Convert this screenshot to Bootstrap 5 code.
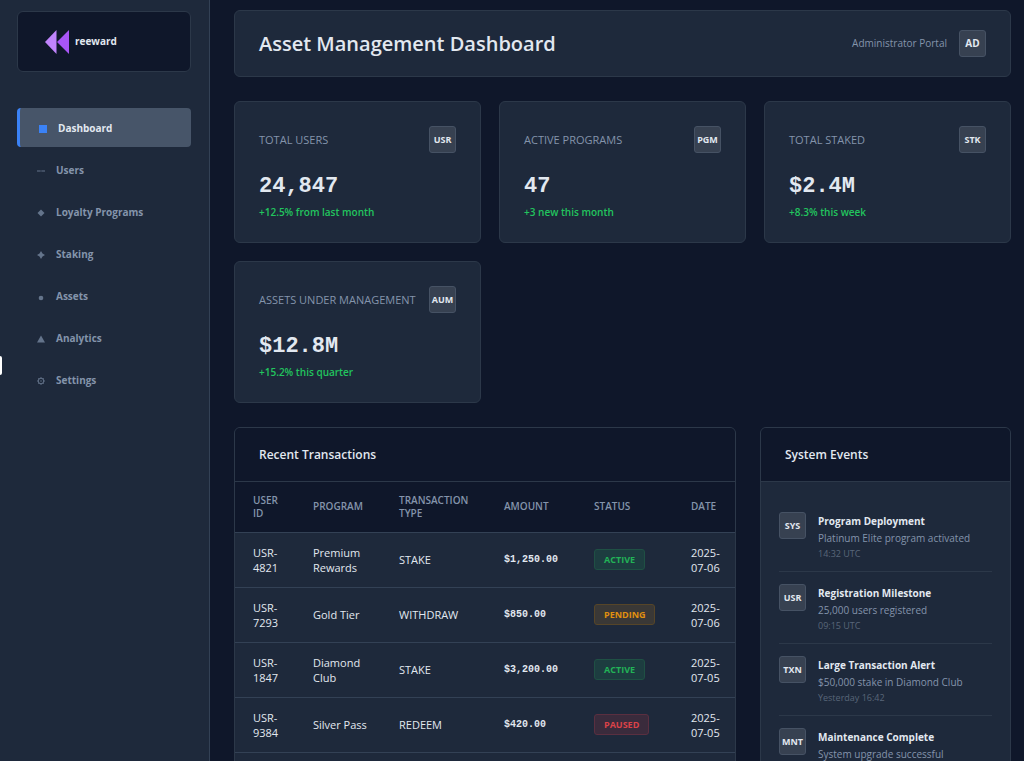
<!DOCTYPE html>
<html lang="en">
<head>
<meta charset="utf-8">
<meta name="viewport" content="width=device-width, initial-scale=1">
<title>Asset Management Dashboard</title>
<link href="https://cdn.jsdelivr.net/npm/bootstrap@5.3.0/dist/css/bootstrap.min.css" rel="stylesheet">
<style>
:root { --ink: #0f172a; --panel: #1e293b; --line: #2c3849; --muted: #8494ab; --bright: #e2e8f0; }
body { background: var(--ink); color: var(--bright); font-family: "Open Sans", "Noto Sans", sans-serif; font-size: 11px; line-height: 15px; }
.sidebar { width: 210px; background: var(--panel); border-right: 1px solid #334155; padding: 11px 18px 11px 17px; }
.brand { background: var(--ink); border: 1px solid var(--line); border-radius: 6px; height: 61px; margin-bottom: 36px; padding-left: 26px; gap: 5px; color: var(--bright); font-size: 10px; font-weight: 700; }
.side-nav { gap: 3px; }
.side-nav .nav-link { height: 39px; padding: 2px 18px 0; gap: 9px; border-radius: 4px; color: var(--muted); font-size: 10px; font-weight: 700; }
.side-nav .nav-link svg { width: 12px; height: 12px; fill: #64748b; }
.side-nav .nav-link.active { background: #475569; color: var(--bright); border-left: 3px solid #3b82f6; padding-left: 17px; }
.side-nav .nav-link.active svg { fill: #3b82f6; }
.edge-tab { left: 0; top: 356px; width: 2px; height: 19px; background: #fff; border-radius: 0 2px 2px 0; }
.content { padding: 10px 13px 0 24px; scrollbar-width: none; }
.content::-webkit-scrollbar { display: none; }
.panel { background: var(--panel); border: 1px solid var(--line); border-radius: 6px; }
.topbar { height: 67px; padding: 0 24px; margin-bottom: 24px; }
.topbar h1 { font-size: 20px; line-height: 30px; font-weight: 600; }
.portal { color: var(--muted); gap: 12px; font-size: 10px; }
.tag { width: 27px; height: 27px; flex: none; background: #374151; border: 1px solid #465264; border-radius: 3px; color: var(--bright); font-size: 9px; font-weight: 700; }
.tag-lg { font-size: 10px; }
.stats { display: grid; grid-template-columns: repeat(3, 1fr); gap: 18px; margin-bottom: 24px; }
.stat { padding: 24px 24px 22px; }
.stat h2 { font-size: 11px; line-height: 15px; font-weight: 500; color: var(--muted); }
.figure-value { font: 700 22px/28px "Liberation Mono", monospace; margin-top: 20px; }
.delta { color: #22c55e; font-size: 10px; line-height: 15px; font-weight: 600; margin-top: 4px; }
.lower { display: grid; grid-template-columns: 2fr 1fr; gap: 24px; }
.panel-title { background: var(--ink); height: 54px; padding: 0 24px; border-bottom: 1px solid var(--line); }
.panel-title h2 { font-size: 12px; line-height: 18px; font-weight: 600; }
.tx { --bs-table-bg: transparent; --bs-table-color: var(--bright); table-layout: fixed; }
.tx > :not(caption) > * > * { padding: 0 12px 0 18px; border-bottom: 1px solid #334155; color: var(--bright); height: 55px; }
.tx > thead > tr > th { background: var(--ink); color: var(--muted); height: 50px; padding-right: 8px; font-size: 10px; line-height: 13px; font-weight: 600; vertical-align: middle; }
.tx td.amount { font: 700 10px/15px "Liberation Mono", monospace; padding-right: 0; }
.status { display: inline-block; border: 1px solid; border-radius: 3px; padding: 2px 9px; font-size: 9px; line-height: 15px; font-weight: 700; }
.status-active { color: #22b357; background: #1d3d40; border-color: #1f5044; }
.status-pending { color: #e0900f; background: #3a3836; border-color: #564528; }
.status-paused { color: #db4248; background: #3a2b3c; border-color: #5a2f40; }
.events { padding: 18px 18px 0; }
.event { padding: 12px 0 10px; gap: 12px; border-bottom: 1px solid var(--line); }
.event:last-child { border-bottom: 0; }
.event h3 { font-size: 10px; line-height: 18px; font-weight: 700; }
.event p { font-size: 10px; line-height: 17px; color: var(--muted); }
.event time { display: block; font-size: 9px; line-height: 14px; color: #596679; }
</style>
</head>
<body>
<div class="d-flex vh-100 overflow-hidden">
  <aside class="sidebar flex-shrink-0">
    <a href="#" class="brand d-flex align-items-center text-decoration-none">
      <svg width="26" height="26" viewBox="0 0 26 26" aria-hidden="true"><path fill="#c084fc" d="M12.500 1v24L1 13z"/><path fill="#a855f7" d="M25 1v24L13 13z"/></svg>
      <span>reeward</span>
    </a>
    <nav class="side-nav nav flex-column">
      <a class="nav-link active d-flex align-items-center" href="#"><svg viewBox="0 0 12 12"><path d="M2 2h8v8H2z"/></svg>Dashboard</a>
      <a class="nav-link d-flex align-items-center" href="#"><svg viewBox="0 0 12 12"><path d="M2 5.500h3.700v1H2zM6.300 5.500H10v1H6.300z"/></svg>Users</a>
      <a class="nav-link d-flex align-items-center" href="#"><svg viewBox="0 0 12 12"><path d="M6 2.500 9.500 6 6 9.500 2.500 6z"/></svg>Loyalty Programs</a>
      <a class="nav-link d-flex align-items-center" href="#"><svg viewBox="0 0 12 12"><path d="M6 2l1.500 2.500L10 6 7.500 7.500 6 10 4.500 7.500 2 6l2.500-1.500z"/></svg>Staking</a>
      <a class="nav-link d-flex align-items-center" href="#"><svg viewBox="0 0 12 12"><circle cx="6" cy="7" r="2.300"/></svg>Assets</a>
      <a class="nav-link d-flex align-items-center" href="#"><svg viewBox="0 0 12 12"><path d="M6 2.500 10 9.500H2z"/></svg>Analytics</a>
      <a class="nav-link d-flex align-items-center" href="#"><svg viewBox="0 0 12 12"><circle cx="6" cy="6" r="2.800" fill="none" stroke="#64748b"/><circle cx="6" cy="6" r=".7"/><path fill="none" stroke="#64748b" stroke-width=".8" d="M6 2v1.500M6 8.500V10M2 6h1.500M8.500 6H10M3.200 3.200l1 1M7.800 7.800l1 1M8.800 3.200l-1 1M4.200 7.800l-1 1"/></svg>Settings</a>
    </nav>
  </aside>
  <main class="content flex-grow-1 overflow-auto">
    <header class="panel topbar d-flex align-items-center justify-content-between">
      <h1 class="mb-0">Asset Management Dashboard</h1>
      <div class="portal d-flex align-items-center"><span>Administrator Portal</span><span class="tag tag-lg d-flex align-items-center justify-content-center">AD</span></div>
    </header>
    <section class="stats">
      <article class="panel stat">
        <div class="d-flex align-items-center justify-content-between"><h2 class="mb-0">TOTAL USERS</h2><span class="tag d-flex align-items-center justify-content-center">USR</span></div>
        <div class="figure-value">24,847</div><div class="delta">+12.5% from last month</div>
      </article>
      <article class="panel stat">
        <div class="d-flex align-items-center justify-content-between"><h2 class="mb-0">ACTIVE PROGRAMS</h2><span class="tag d-flex align-items-center justify-content-center">PGM</span></div>
        <div class="figure-value">47</div><div class="delta">+3 new this month</div>
      </article>
      <article class="panel stat">
        <div class="d-flex align-items-center justify-content-between"><h2 class="mb-0">TOTAL STAKED</h2><span class="tag d-flex align-items-center justify-content-center">STK</span></div>
        <div class="figure-value">$2.4M</div><div class="delta">+8.3% this week</div>
      </article>
      <article class="panel stat">
        <div class="d-flex align-items-center justify-content-between"><h2 class="mb-0">ASSETS UNDER MANAGEMENT</h2><span class="tag d-flex align-items-center justify-content-center">AUM</span></div>
        <div class="figure-value">$12.8M</div><div class="delta">+15.2% this quarter</div>
      </article>
    </section>
    <div class="lower">
      <section class="panel overflow-hidden">
        <div class="panel-title d-flex align-items-center"><h2 class="mb-0">Recent Transactions</h2></div>
        <table class="table tx align-middle mb-0">
          <colgroup><col style="width:60px"><col style="width:86px"><col style="width:105px"><col style="width:90px"><col style="width:97px"><col style="width:62px"></colgroup>
          <thead><tr><th scope="col">USER ID</th><th scope="col">PROGRAM</th><th scope="col">TRANSACTION TYPE</th><th scope="col">AMOUNT</th><th scope="col">STATUS</th><th scope="col">DATE</th></tr></thead>
          <tbody>
            <tr><td>USR-4821</td><td>Premium Rewards</td><td>STAKE</td><td class="amount">$1,250.00</td><td><span class="status status-active">ACTIVE</span></td><td>2025-07-06</td></tr>
            <tr><td>USR-7293</td><td>Gold Tier</td><td>WITHDRAW</td><td class="amount">$850.00</td><td><span class="status status-pending">PENDING</span></td><td>2025-07-06</td></tr>
            <tr><td>USR-1847</td><td>Diamond Club</td><td>STAKE</td><td class="amount">$3,200.00</td><td><span class="status status-active">ACTIVE</span></td><td>2025-07-05</td></tr>
            <tr><td>USR-9384</td><td>Silver Pass</td><td>REDEEM</td><td class="amount">$420.00</td><td><span class="status status-paused">PAUSED</span></td><td>2025-07-05</td></tr>
          </tbody>
        </table>
      </section>
      <section class="panel overflow-hidden">
        <div class="panel-title d-flex align-items-center"><h2 class="mb-0">System Events</h2></div>
        <div class="events">
          <div class="event d-flex"><span class="tag d-flex align-items-center justify-content-center">SYS</span><div><h3 class="mb-0">Program Deployment</h3><p class="mb-0">Platinum Elite program activated</p><time>14:32 UTC</time></div></div>
          <div class="event d-flex"><span class="tag d-flex align-items-center justify-content-center">USR</span><div><h3 class="mb-0">Registration Milestone</h3><p class="mb-0">25,000 users registered</p><time>09:15 UTC</time></div></div>
          <div class="event d-flex"><span class="tag d-flex align-items-center justify-content-center">TXN</span><div><h3 class="mb-0">Large Transaction Alert</h3><p class="mb-0">$50,000 stake in Diamond Club</p><time>Yesterday 16:42</time></div></div>
          <div class="event d-flex"><span class="tag d-flex align-items-center justify-content-center">MNT</span><div><h3 class="mb-0">Maintenance Complete</h3><p class="mb-0">System upgrade successful</p></div></div>
        </div>
      </section>
    </div>
  </main>
</div>
<div class="edge-tab position-absolute"></div>
<script src="https://cdn.jsdelivr.net/npm/bootstrap@5.3.0/dist/js/bootstrap.bundle.min.js"></script>
</body>
</html>
